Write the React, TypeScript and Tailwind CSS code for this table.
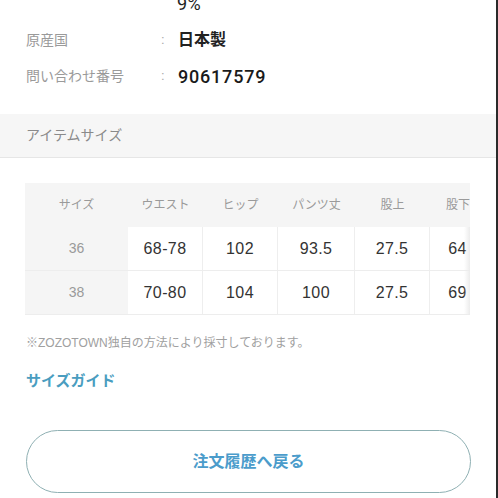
import React from "react";

const font = { fontFamily: '"Liberation Sans", "Noto Sans CJK JP", "Noto Sans", sans-serif' };
const roboto = { fontFamily: 'Roboto, "Liberation Sans", sans-serif' };

const cols = ["w-[103px]", "w-[75px]", "w-[75px]", "w-[77px]", "w-[75px]", "w-[56px]"];
const header = ["サイズ", "ウエスト", "ヒップ", "パンツ丈", "股上", "股下"];
const rows = [
  ["36", "68-78", "102", "93.5", "27.5", "64"],
  ["38", "70-80", "104", "100", "27.5", "69"],
];

export default function App() {
  return (
    <div className="w-[498px] h-[498px] overflow-hidden bg-white flex" style={font}>
      <div className="w-[496px] h-full flex flex-col">
        <div className="relative h-[114px]">
          <div className="absolute left-[177px] top-[-6px] text-[18px] leading-[20px] text-[#222] tracking-[0.5px]" style={roboto}>9%</div>
          <div className="pt-[29px] pl-[26px] flex items-center h-[22px] box-content">
            <div className="w-[135px] text-[14px] text-[#9a9a9a]">原産国</div>
            <div className="w-[17px] text-[13px] text-[#aaa]">:</div>
            <div className="text-[16px] font-bold text-[#222]">日本製</div>
          </div>
          <div className="pt-[14px] pl-[26px] flex items-center h-[22px] box-content">
            <div className="w-[135px] text-[14px] text-[#9a9a9a]">問い合わせ番号</div>
            <div className="w-[17px] text-[13px] text-[#aaa]">:</div>
            <div className="text-[18px] font-medium text-[#1a1a1a] tracking-[0.8px]" style={roboto}>90617579</div>
          </div>
        </div>
        <div className="h-[44px] bg-[#f6f6f6] border-b border-[#e6e6e6] flex items-center pl-[26px] text-[14px] text-[#8a8a8a]">
          アイテムサイズ
        </div>
        <div className="pt-[25px] pl-[25px]">
          <div className="relative w-[445px] overflow-hidden">
            <div className="w-[461px]">
              <div className="flex h-[44px] bg-[#f5f5f5]">
                {header.map((h, i) => (
                  <div key={i} className={`${cols[i]} shrink-0 flex items-center justify-center text-[12px] text-[#9a9a9a]`}>
                    {h}
                  </div>
                ))}
              </div>
              {rows.map((r, ri) => (
                <div key={ri} className="flex h-[44px] border-b border-[#ededed]">
                  {r.map((c, i) =>
                    i === 0 ? (
                      <div key={i} className={`${cols[i]} shrink-0 bg-[#f5f5f5] flex items-center justify-center text-[14px] text-[#9a9a9a]`}>
                        {c}
                      </div>
                    ) : (
                      <div key={i} className={`${cols[i]} shrink-0 bg-white border-r border-[#eeeeee] flex items-center justify-center text-[16px] text-[#333] tracking-[0.4px]`}>
                        {c}
                      </div>
                    )
                  )}
                </div>
              ))}
            </div>
            <div className="absolute right-0 top-[44px] bottom-0 w-[6px] bg-gradient-to-r from-transparent to-[#ececec]" />
          </div>
        </div>
        <div className="pl-[26px] pt-[19px] text-[12px] text-[#a0a0a0] leading-[18px]">
          ※ZOZOTOWN独自の方法により採寸しております。
        </div>
        <div className="pl-[26px] pt-[19px] text-[15px] font-bold text-[#4a9dc0] leading-[20px]">
          サイズガイド
        </div>
        <div className="pl-[26px] pt-[39px]">
          <div className="w-[445px] h-[63px] rounded-full border border-[#8fb0b3] flex items-center justify-center text-[16px] font-bold text-[#4b9ccb]">
            注文履歴へ戻る
          </div>
        </div>
      </div>
      <div className="w-[2px] h-full bg-[#2a2a2a]" />
    </div>
  );
}
